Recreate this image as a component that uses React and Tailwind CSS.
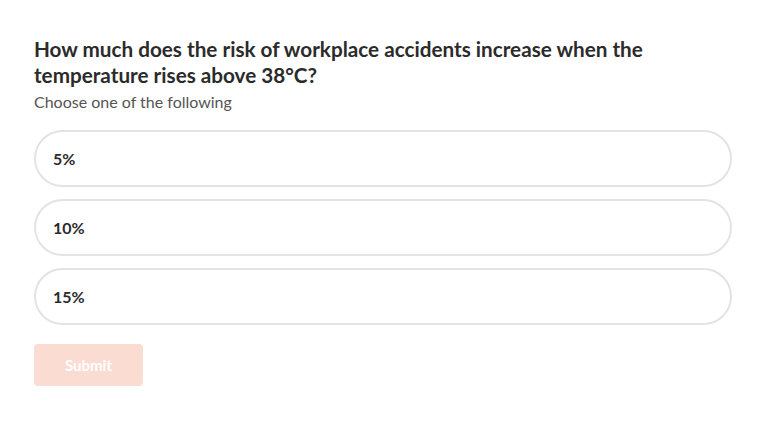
const OPTIONS = ['5%', '10%', '15%'];

export default function App() {
  return (
    <div className="min-h-screen bg-white px-[34px] pt-[36px] text-[#2b2b2b]" style={{ fontFamily: 'Lato, "Noto Sans", sans-serif' }}>
      <h1 className="text-[20.7px] font-bold leading-[26px] max-w-[660px]">
        How much does the risk of workplace accidents increase when the temperature rises above 38°C?
      </h1>
      <p className="mt-[2px] text-[16px] leading-[24px] text-[#555555]">Choose one of the following</p>

      <div className="mt-[16px] flex w-[698px] flex-col gap-[12px]">
        {OPTIONS.map((o) => (
          <button
            key={o}
            className="flex h-[57px] items-center rounded-full border-2 border-[#e3e3e3] bg-white px-[17px] text-left text-[16px] font-bold"
          >
            {o}
          </button>
        ))}
      </div>

      <button className="mt-[19px] h-[42px] w-[109px] rounded-[4px] bg-[#fbdcd2] text-[15px] font-bold text-white">
        Submit
      </button>
    </div>
  );
}
